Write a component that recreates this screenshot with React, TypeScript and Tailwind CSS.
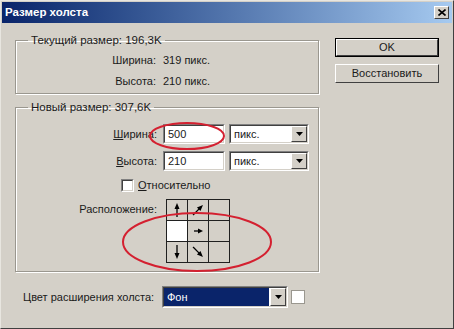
import React from "react";

const font = { fontFamily: '"Liberation Sans", Arial, sans-serif' };

function Arrow({ dir }: { dir: "n" | "ne" | "e" | "s" | "se" }) {
  const rot: Record<string, number> = { n: 0, ne: 45, e: 90, s: 180, se: 135 };
  const short = dir === "e";
  return (
    <svg width="20" height="20" viewBox="0 0 20 20">
      <g transform={`rotate(${rot[dir]} 10 10)`}>
        <line x1="10" y1={short ? 14 : 17} x2="10" y2="7" stroke="#000" strokeWidth="1.3" />
        <polygon points={short ? "10,5 7.5,10 12.5,10" : "10,3 7.5,9 12.5,9"} fill="#000" />
      </g>
    </svg>
  );
}

function DropBtn() {
  return (
    <div className="w-[16px] h-full bg-[#d4d0c8] border border-t-white border-l-white border-r-[#404040] border-b-[#404040] flex items-center justify-center">
      <svg width="7" height="4" viewBox="0 0 7 4"><polygon points="0,0 7,0 3.5,4" fill="#000" /></svg>
    </div>
  );
}

function Sunken({ className, children }: { className?: string; children?: React.ReactNode }) {
  return (
    <div className={`border border-t-[#808080] border-l-[#808080] border-r-white border-b-white ${className ?? ""}`}>
      <div className="w-full h-full border border-t-[#404040] border-l-[#404040] border-r-[#d4d0c8] border-b-[#d4d0c8] bg-white flex items-center">
        {children}
      </div>
    </div>
  );
}

function Button({ children, def }: { children: React.ReactNode; def?: boolean }) {
  return (
    <div className={`w-[104px] h-[19px] ${def ? "border border-black" : ""}`}>
      <div className="w-full h-full border border-t-white border-l-white border-r-[#404040] border-b-[#404040] bg-[#d4d0c8] flex items-center justify-center text-[11px] text-[#1a1a1a]">
        {children}
      </div>
    </div>
  );
}

export default function App() {
  return (
    <div
      className="relative w-[454px] h-[329px] bg-[#d4d0c8] border border-t-[#e8e6e0] border-l-[#e8e6e0] border-r-[#404040] border-b-[#404040] overflow-hidden text-[11px] text-[#1a1a1a]"
      style={font}
    >
      {/* title bar */}
      <div className="h-[21px] mx-[1px] mt-[1px] bg-gradient-to-r from-[#0a246a] to-[#a6caf0] flex items-center justify-between pl-[3px] pr-[3px]">
        <span className="text-white font-bold text-[11.5px]">Размер холста</span>
        <div className="w-[15px] h-[13px] bg-[#d4d0c8] border border-t-white border-l-white border-r-[#404040] border-b-[#404040] flex items-center justify-center">
          <svg width="8" height="7" viewBox="0 0 8 7">
            <path d="M0.5 0.5 L7.5 6.5 M7.5 0.5 L0.5 6.5" stroke="#000" strokeWidth="1.6" />
          </svg>
        </div>
      </div>

      <div className="flex pl-[14px] pt-[11px]">
        {/* left column */}
        <div className="w-[304px] flex flex-col">
          <fieldset className="h-[60px] border border-[#9a978f] shadow-[inset_1px_1px_0_#fff,1px_1px_0_#fff] px-0">
            <legend className="ml-[12px] px-[3px] leading-[13px] text-[11.5px]">Текущий размер: 196,3K</legend>
            <div className="flex flex-col gap-[8px] pt-[7px]">
              <div className="flex leading-[13px]">
                <span className="w-[140px] text-right">Ширина:</span>
                <span className="ml-[7px]">319 пикс.</span>
              </div>
              <div className="flex leading-[13px]">
                <span className="w-[140px] text-right">Высота:</span>
                <span className="ml-[7px]">210 пикс.</span>
              </div>
            </div>
          </fieldset>

          <fieldset className="mt-[7px] h-[171px] border border-[#9a978f] shadow-[inset_1px_1px_0_#fff,1px_1px_0_#fff] px-0">
            <legend className="ml-[12px] px-[3px] leading-[13px] text-[11.5px]">Новый размер: 307,6K</legend>
            <div className="flex flex-col pt-[10px]">
              <div className="flex items-center h-[20px]">
                <span className="w-[141px] text-right"><u>Ш</u>ирина:</span>
                <Sunken className="ml-[6px] w-[62px] h-[20px]"><span className="pl-[3px]">500</span></Sunken>
                <Sunken className="ml-[4px] w-[80px] h-[20px]">
                  <span className="pl-[3px] flex-1">пикс.</span>
                  <DropBtn />
                </Sunken>
              </div>
              <div className="flex items-center h-[20px] mt-[7px]">
                <span className="w-[141px] text-right"><u>В</u>ысота:</span>
                <Sunken className="ml-[6px] w-[62px] h-[20px]"><span className="pl-[3px]">210</span></Sunken>
                <Sunken className="ml-[4px] w-[80px] h-[20px]">
                  <span className="pl-[3px] flex-1">пикс.</span>
                  <DropBtn />
                </Sunken>
              </div>
              <div className="flex items-center mt-[6px] ml-[105px]">
                <Sunken className="w-[13px] h-[13px]" />
                <span className="ml-[4px]"><u>О</u>тносительно</span>
              </div>
              <div className="flex mt-[5px]">
                <span className="w-[141px] text-right pt-[2px]">Расположение:</span>
                <div className="ml-[9px] grid grid-cols-3 gap-px p-px bg-[#202020]">
                  <div className="w-[20px] h-[20px] bg-[#d4d0c8]"><Arrow dir="n" /></div>
                  <div className="w-[20px] h-[20px] bg-[#d4d0c8]"><Arrow dir="ne" /></div>
                  <div className="w-[20px] h-[20px] bg-[#d4d0c8]" />
                  <div className="w-[20px] h-[20px] bg-white" />
                  <div className="w-[20px] h-[20px] bg-[#d4d0c8]"><Arrow dir="e" /></div>
                  <div className="w-[20px] h-[20px] bg-[#d4d0c8]" />
                  <div className="w-[20px] h-[20px] bg-[#d4d0c8]"><Arrow dir="s" /></div>
                  <div className="w-[20px] h-[20px] bg-[#d4d0c8]"><Arrow dir="se" /></div>
                  <div className="w-[20px] h-[20px] bg-[#d4d0c8]" />
                </div>
              </div>
            </div>
          </fieldset>

          <div className="flex items-center mt-[14px] ml-[8px]">
            <span className="w-[139px]">Цвет расширения холста:</span>
            <Sunken className="w-[126px] h-[22px]">
              <div className="flex-1 h-full bg-[#0a246a] text-white flex items-center pl-[3px] mr-[1px]">Фон</div>
              <DropBtn />
            </Sunken>
            <div className="ml-[3px] w-[14px] h-[14px] bg-white border border-[#9a978f]" />
          </div>
        </div>

        {/* buttons */}
        <div className="ml-[16px] mt-[4px] flex flex-col gap-[7px]">
          <Button def>OK</Button>
          <Button>Восстановить</Button>
        </div>
      </div>

      {/* red ellipses (annotation overlay) */}
      <svg className="absolute left-0 top-0 pointer-events-none" width="454" height="329">
        <ellipse cx="186" cy="135" rx="37" ry="13" fill="none" stroke="#d42030" strokeWidth="2" />
        <ellipse cx="196" cy="241" rx="74" ry="29" fill="none" stroke="#d42030" strokeWidth="2" />
      </svg>
    </div>
  );
}
